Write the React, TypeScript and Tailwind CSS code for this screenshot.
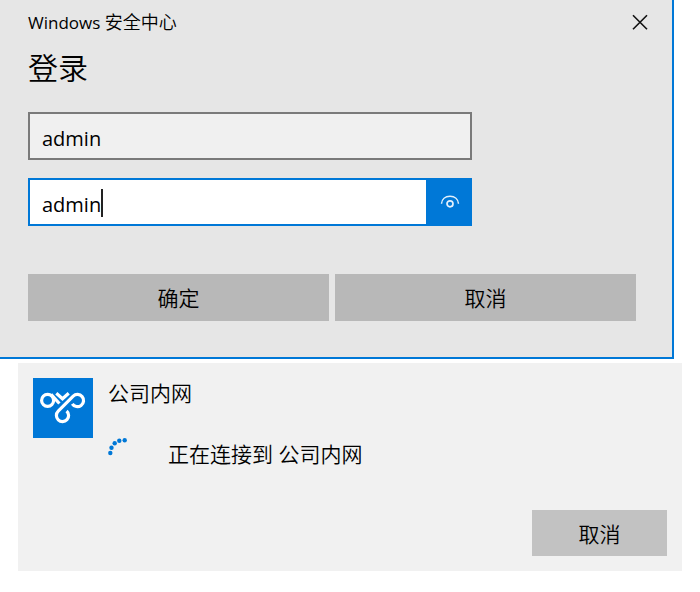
import { useState } from "react";

function CloseIcon() {
  return (
    <svg width="16" height="16" viewBox="0 0 16 16" fill="none" stroke="#111" strokeWidth="1.6" aria-hidden="true">
      <path d="M1 1.3L15 15.3M15 1.3L1 15.3" />
    </svg>
  );
}

function RevealIcon() {
  return (
    <svg width="20" height="14" viewBox="0 0 20 14" fill="none" stroke="#e4f1fc" strokeWidth="1.5" aria-hidden="true">
      <path d="M1.5 8.8C1.8 4 5.3 1.3 10 1.3S18.2 4 18.5 8.8" />
      <circle cx="10" cy="8.8" r="3" strokeWidth="1.7" />
    </svg>
  );
}

function VpnLogo() {
  return (
    <svg width="60" height="60" viewBox="0 0 60 60" fill="none" stroke="#fff" strokeWidth="3.2" className="shrink-0 bg-[#0078d7]" aria-hidden="true">
      <circle cx="14.6" cy="22.4" r="6" />
      <path d="M18 16.3L26.4 25.5" />
      <path d="M23.3 15.3L29.5 20.8L35.7 15.3" />
      <path d="M39.3 25.8A6.1 6.1 0 1 0 40.2 18.2L25.2 33.2A6.1 6.1 0 1 0 33.6 33" />
    </svg>
  );
}

function Spinner() {
  return (
    <svg width="20" height="18" viewBox="0 0 20 18" fill="#0078d7" className="mt-1 shrink-0" aria-hidden="true">
      <circle cx="2.3" cy="15" r="2.2" />
      <circle cx="3.5" cy="9.7" r="2.2" />
      <circle cx="6.7" cy="5.3" r="2.2" />
      <circle cx="11.3" cy="2.7" r="2.2" />
      <circle cx="16.7" cy="2.2" r="2.2" />
    </svg>
  );
}

export default function App() {
  const [user, setUser] = useState("admin");
  const [password, setPassword] = useState("admin");

  return (
    <main className="bg-white font-['Open_Sans','Noto_Sans_CJK_SC',sans-serif] text-[21px] leading-7 font-[350] text-black">
      <section aria-labelledby="login-title" className="mr-[26px] border-r-2 border-b-2 border-[#0078d7] bg-[#e6e6e6] pr-9 pb-9 pl-7">
        <header className="flex h-11 items-center justify-between">
          <p className="text-[18px] leading-6">
            <span className="text-[17px] font-normal">Windows </span>安全中心
          </p>
          <button type="button" aria-label="关闭" className="-mr-4 flex size-6 items-center justify-center">
            <CloseIcon />
          </button>
        </header>
        <h1 id="login-title" className="text-[30px] leading-12 font-[350]">登录</h1>
        <form className="pt-5" onSubmit={(e) => e.preventDefault()}>
          <div className="flex max-w-[444px] flex-col gap-[18px]">
            <input
              aria-label="用户名"
              value={user}
              onChange={(e) => setUser(e.target.value)}
              className="h-12 w-full border-2 border-[#7a7a7a] bg-[#f0f0f0] px-3 pt-1 text-[20px] font-normal outline-none"
            />
            <div className="relative flex h-12 border-2 border-[#0078d7] bg-white">
              <input
                aria-label="密码"
                value={password}
                onChange={(e) => setPassword(e.target.value)}
                className="min-w-0 flex-1 px-3 pt-1.5 text-[20px] font-normal caret-transparent outline-none"
              />
              <span className="absolute top-[9px] left-[71px] h-7 w-0.5 bg-[#222]" />
              <button type="button" aria-label="显示密码" className="flex w-11 items-center justify-center bg-[#0078d7] pl-1">
                <RevealIcon />
              </button>
            </div>
          </div>
          <div className="mt-12 grid grid-cols-2 gap-1.5">
            <button type="submit" className="h-[47px] bg-[#b8b8b8]">确定</button>
            <button type="button" className="h-[47px] bg-[#b8b8b8]">取消</button>
          </div>
        </form>
      </section>

      <section aria-label="公司内网" className="mt-1 mr-[18px] ml-[18px] bg-[#f1f1f1] p-[15px]">
        <div className="flex gap-[15px]">
          <VpnLogo />
          <div>
            <h2 className="pt-px font-[350]">公司内网</h2>
            <div className="mt-[27px] flex h-10 gap-10">
              <Spinner />
              <p role="status" className="mt-1.5">正在连接到 公司内网</p>
            </div>
          </div>
        </div>
        <div className="mt-9 flex justify-end">
          <button type="button" className="h-[46px] w-[135px] bg-[#c2c2c2] pt-0.5">取消</button>
        </div>
      </section>
    </main>
  );
}
